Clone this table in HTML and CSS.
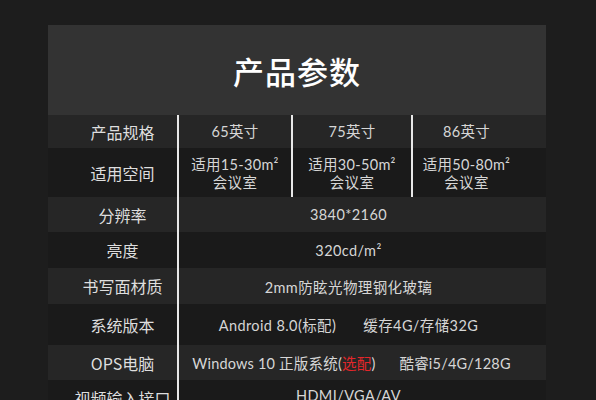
FILE: index.html
```html
<!DOCTYPE html>
<html lang="zh-CN">
<head>
  <meta charset="UTF-8">
  <meta name="viewport" content="width=device-width, initial-scale=1.0">
  <link rel="stylesheet" href="styles.css">
  <title>产品参数</title>
</head>
<body>

<div id="panel">
  <div id="title">产品参数</div>

  <div class="row light r1">
    <div class="label">产品规格</div>
    <div class="cell c1">65英寸</div>
    <div class="cell c2">75英寸</div>
    <div class="cell c3">86英寸</div>
  </div>
  <div class="row dark r2">
    <div class="label">适用空间</div>
    <div class="cell c1">适用15-30m²<br>会议室</div>
    <div class="cell c2">适用30-50m²<br>会议室</div>
    <div class="cell c3">适用50-80m²<br>会议室</div>
  </div>
  <div class="row light r3">
    <div class="label">分辨率</div>
    <div class="value">3840*2160</div>
  </div>
  <div class="row dark r4">
    <div class="label">亮度</div>
    <div class="value">320cd/m²</div>
  </div>
  <div class="row light r5">
    <div class="label">书写面材质</div>
    <div class="value">2mm防眩光物理钢化玻璃</div>
  </div>
  <div class="row dark r6">
    <div class="label">系统版本</div>
    <div class="value"><span>Android 8.0(标配)</span><span>缓存4G/存储32G</span></div>
  </div>
  <div class="row light r7">
    <div class="label">OPS电脑</div>
    <div class="value"><span>Windows 10 正版系统(<em class="opt">选配</em>)</span><span>酷睿i5/4G/128G</span></div>
  </div>
  <div class="row dark r8">
    <div class="label">视频输入接口</div>
    <div class="value">HDMI/VGA/AV</div>
  </div>
</div>

</body>
</html>
```

FILE: styles.css
```css
body {
  margin: 0;
  background-color: #1d1d1d;
  font-family: 'Lato', 'Noto Sans CJK SC', sans-serif;
  color: #d6d6d6;
  overflow: hidden;
}

#panel {
  width: 498px;
  margin: 25px 0 0 48px;
}

#title {
  height: 90px;
  display: flex;
  align-items: center;
  justify-content: center;
  background-color: #333333;
  color: #fff;
  font-family: 'Noto Sans CJK SC', sans-serif;
  font-size: 31px;
  font-weight: 500;
  letter-spacing: 1px;
}

.row {
  display: flex;
  align-items: stretch;
}

.light {
  background-color: #262626;
}

.dark {
  background-color: #1a1a1a;
}

.r1 { height: 33px; }
.r2 { height: 49px; }
.r3 { height: 35px; }
.r4 { height: 36px; }
.r5 { height: 36px; }
.r6 { height: 41px; }
.r7 { height: 35px; }
.r8 { height: 36px; }

.label {
  width: 131px;
  box-sizing: border-box;
  padding-left: 20px;
  display: flex;
  align-items: center;
  justify-content: center;
  font-family: 'Noto Sans CJK SC', sans-serif;
  font-size: 16px;
  color: #dedede;
  border-right: 2px solid #e8e8e8;
}

.r8 .label {
  align-items: flex-start;
  padding-top: 6px;
}

.cell {
  display: flex;
  align-items: center;
  justify-content: center;
  text-align: center;
  font-size: 14.5px;
  line-height: 18px;
  letter-spacing: 0.3px;
  box-sizing: border-box;
}

.c1 {
  width: 114px;
  border-right: 2px solid #e8e8e8;
}

.c2 {
  width: 120px;
  border-right: 2px solid #e8e8e8;
}

.c3 {
  width: 131px;
  padding-right: 24px;
}

.r2 .cell {
  padding-top: 2px;
}

.value {
  flex: 1;
  display: flex;
  align-items: center;
  justify-content: center;
  gap: 27px;
  padding-right: 28px;
  font-size: 14.5px;
  letter-spacing: 0.4px;
}

.r7 .value {
  gap: 24px;
  padding-right: 22px;
  letter-spacing: 0.2px;
}

.r8 .value {
  align-items: flex-start;
  padding-top: 7px;
}

.opt {
  font-style: normal;
  color: #e3262a;
}
```
